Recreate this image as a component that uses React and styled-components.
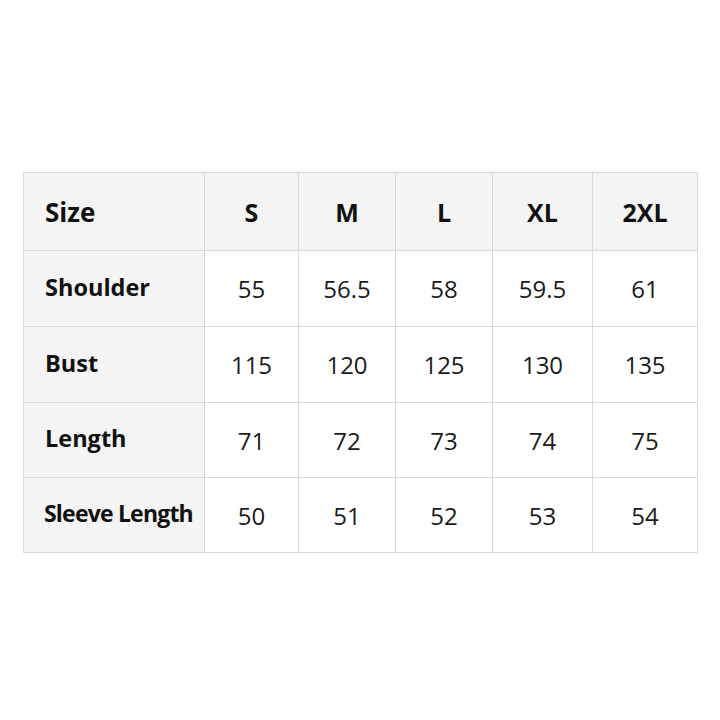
import React from "react";
import styled, { createGlobalStyle } from "styled-components";

const Global = createGlobalStyle`
  html, body { margin: 0; padding: 0; background: #ffffff; }
  body { font-family: "Open Sans", "Noto Sans", sans-serif; color: #111; }
`;

const Page = styled.div`
  width: 720px;
  height: 720px;
  padding: 172px 0 0 23px;
  box-sizing: border-box;
`;

const Table = styled.table`
  border-collapse: collapse;
  table-layout: fixed;
  width: 674px;
`;

const Row = styled.tr`
  height: ${(p) => p.$h}px;
  background: ${(p) => (p.$head ? "#f4f4f4" : "#ffffff")};
`;

const HeadCell = styled.th`
  border: 1px solid #d9d9d9;
  padding: 0;
  font-weight: 700;
  font-size: 25px;
  text-align: center;
  color: #111;
`;

const LabelCell = styled.th`
  border: 1px solid #d9d9d9;
  padding: 0 0 ${(p) => p.$pb || 0}px ${(p) => p.$pl}px;
  font-weight: 700;
  font-size: ${(p) => p.$fs}px;
  letter-spacing: ${(p) => p.$ls || 0}px;
  text-align: left;
  background: #f4f4f4;
  color: #111;
  white-space: nowrap;
`;

const ValueCell = styled.td`
  border: 1px solid #d9d9d9;
  padding: 0;
  font-size: 24px;
  text-align: center;
  color: #1a1a1a;
`;

const widths = [181, 94, 97, 97, 100, 105];
const sizes = ["S", "M", "L", "XL", "2XL"];
const rows = [
  { label: "Shoulder", vals: ["55", "56.5", "58", "59.5", "61"], h: 76 },
  { label: "Bust", vals: ["115", "120", "125", "130", "135"], h: 76 },
  { label: "Length", vals: ["71", "72", "73", "74", "75"], h: 75 },
  { label: "Sleeve Length", vals: ["50", "51", "52", "53", "54"], h: 75, small: true },
];

export default function App() {
  return (
    <>
      <Global />
      <Page>
        <Table>
          <colgroup>
            {widths.map((w, i) => (
              <col key={i} style={{ width: w }} />
            ))}
          </colgroup>
          <tbody>
            <Row $head $h={78}>
              <LabelCell $pl={21} $fs={26}>Size</LabelCell>
              {sizes.map((s) => (
                <HeadCell key={s}>{s}</HeadCell>
              ))}
            </Row>
            {rows.map((r) => (
              <Row key={r.label} $h={r.h}>
                <LabelCell
                  $pl={r.small ? 20 : 21}
                  $fs={r.small ? 23 : 23.5}
                  $ls={r.small ? -0.8 : 0}
                  $pb={4}
                >
                  {r.label}
                </LabelCell>
                {r.vals.map((v, i) => (
                  <ValueCell key={i}>{v}</ValueCell>
                ))}
              </Row>
            ))}
          </tbody>
        </Table>
      </Page>
    </>
  );
}
